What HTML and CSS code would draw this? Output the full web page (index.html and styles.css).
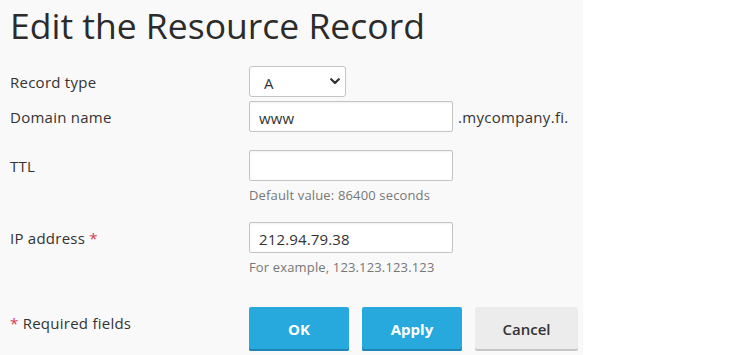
FILE: index.html
```html
<!DOCTYPE html>
<html>
<head>
<meta charset="utf-8">
<link rel="stylesheet" href="styles.css">
</head>
<body>
<div class="page">
  <h1 class="title">Edit the Resource Record</h1>
  <form class="form">
    <div class="row row-type">
      <div class="label">Record type</div>
      <div class="field">
        <div class="select-wrap">
          <select class="select"><option>A</option></select>
          <svg class="chevron" width="10" height="7" viewBox="0 0 10 7"><path d="M1.2 1.2 L5 5 L8.8 1.2" fill="none" stroke="#333" stroke-width="2.2" stroke-linecap="round" stroke-linejoin="round"/></svg>
        </div>
      </div>
    </div>
    <div class="row row-domain">
      <div class="label">Domain name</div>
      <div class="field inline">
        <input class="input" type="text" value="www">
        <span class="suffix">.mycompany.fi.</span>
      </div>
    </div>
    <div class="row row-ttl">
      <div class="label">TTL</div>
      <div class="field">
        <input class="input" type="text" value="">
        <div class="hint">Default value: 86400 seconds</div>
      </div>
    </div>
    <div class="row row-ip">
      <div class="label">IP address&nbsp;<span class="req">*</span></div>
      <div class="field">
        <input class="input" type="text" value="212.94.79.38">
        <div class="hint">For example, 123.123.123.123</div>
      </div>
    </div>
    <div class="row row-actions">
      <div class="label label-req"><span class="req">*</span>&nbsp;Required fields</div>
      <div class="buttons">
        <button type="button" class="btn btn-primary">OK</button>
        <button type="button" class="btn btn-primary">Apply</button>
        <button type="button" class="btn btn-default">Cancel</button>
      </div>
    </div>
  </form>
</div>
</body>
</html>
```
FILE: styles.css
```css
html, body {
  margin: 0;
  padding: 0;
  background: #ffffff;
}
body {
  font-family: "Open Sans", "Liberation Sans", sans-serif;
  color: #333333;
  font-size: 15px;
}
.page {
  width: 573px;
  min-height: 355px;
  background: #f9f9f9;
  padding: 3px 0 0 10px;
  box-sizing: content-box;
}
.title {
  margin: 0 0 19px 0;
  font-size: 35.5px;
  line-height: 44px;
  font-weight: 400;
  color: #2b2b2b;
}
.form {
  display: flex;
  flex-direction: column;
}
.row {
  display: flex;
  align-items: flex-start;
}
.label {
  width: 239px;
  flex: none;
  height: 31px;
  display: flex;
  align-items: center;
  font-size: 15px;
  letter-spacing: 0.25px;
  color: #333;
}
.req {
  color: #d23a52;
}
.field {
  display: flex;
  flex-direction: column;
}
.field.inline {
  flex-direction: row;
  align-items: center;
}
.row-type { margin-bottom: 4px; }
.row-domain { margin-bottom: 18px; }
.row-ttl { margin-bottom: 19px; }
.row-ip { margin-bottom: 32px; }

.select-wrap {
  position: relative;
  width: 97px;
  height: 31px;
}
.select {
  appearance: none;
  -webkit-appearance: none;
  width: 97px;
  height: 31px;
  margin: 0;
  border: 1px solid #c4c4c4;
  border-radius: 3px;
  background: #ffffff;
  font-family: inherit;
  font-size: 15px;
  color: #333;
  padding: 2px 0 0 14px;
  box-sizing: border-box;
}
.chevron {
  position: absolute;
  right: 6px;
  top: 12px;
  pointer-events: none;
}
.input {
  width: 204px;
  height: 31px;
  margin: 0;
  box-sizing: border-box;
  border: 1px solid #c4c4c4;
  border-radius: 2px;
  background: #fff;
  box-shadow: inset 0 1px 2px rgba(0,0,0,0.06);
  font-family: inherit;
  font-size: 15px;
  letter-spacing: 0.15px;
  color: #333;
  padding: 2px 9px 0 9px;
}
.suffix {
  margin-left: 5px;
  font-size: 15px;
  letter-spacing: 0.3px;
  color: #333;
}
.hint {
  margin-top: 6px;
  font-size: 13px;
  letter-spacing: 0.15px;
  line-height: 16px;
  color: #777;
}
.row-actions .label {
  height: 32px;
}
.buttons {
  display: flex;
  gap: 13px;
}
.btn {
  height: 44px;
  margin: 0;
  border: none;
  border-radius: 2px;
  font-family: inherit;
  font-size: 15px;
  font-weight: 700;
  padding: 0;
  box-sizing: border-box;
  cursor: pointer;
}
.btn-primary {
  width: 100px;
  background: #28a9dd;
  color: #fff;
  box-shadow: inset 0 -2px 0 #1d86b3;
}
.btn-default {
  width: 103px;
  background: #ececec;
  color: #333;
  font-weight: 600;
  box-shadow: inset 0 -2px 0 #c8c8c8;
}
```
